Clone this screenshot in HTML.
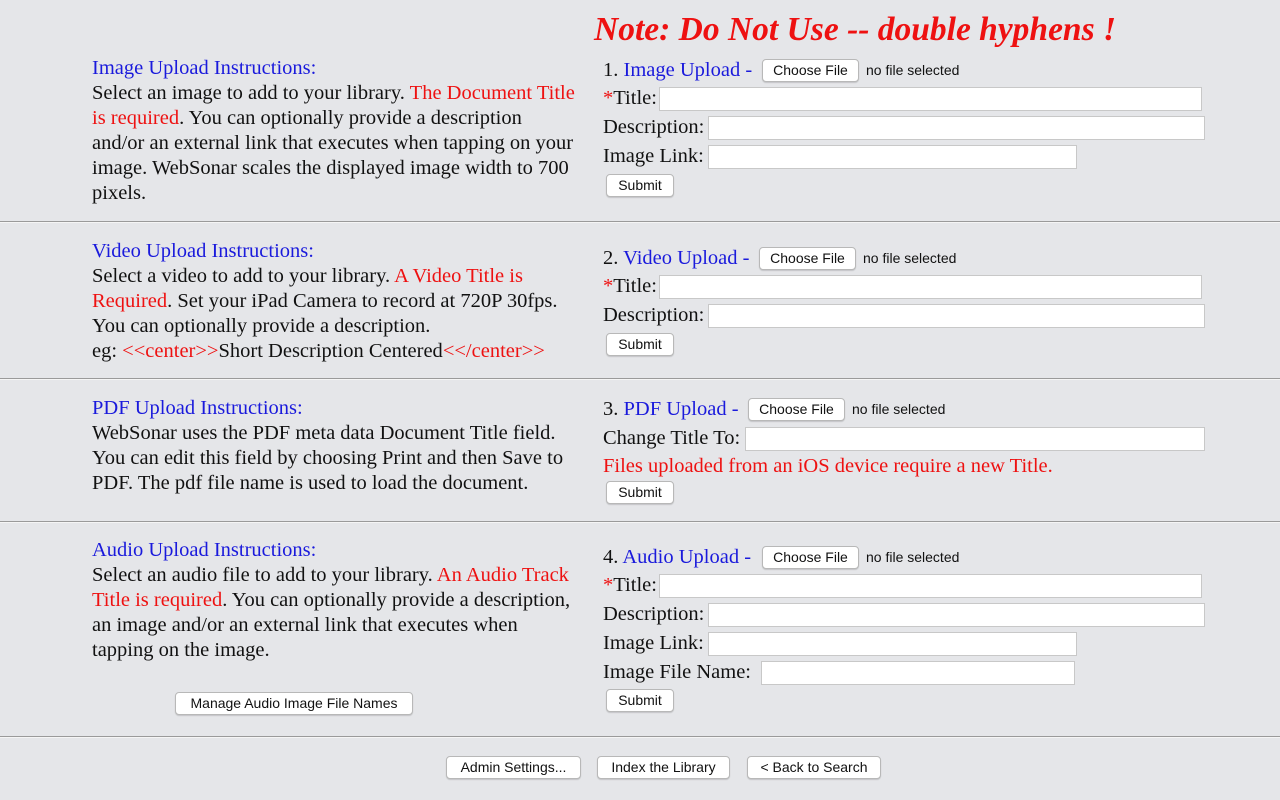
<!DOCTYPE html>
<html><head><style>
body{margin:0;width:1280px;height:800px;background:#e5e6e9;font-family:"Liberation Serif",serif;font-size:20.5px;color:#111;position:relative;overflow:hidden}
.a{position:absolute;white-space:nowrap;line-height:25px}
.b{color:#1a1adc}.r{color:#ee1111}
.hr{position:absolute;left:0;width:1280px;height:1px;background:#9a9a9a;border-bottom:1px solid #f5f5f5}
.in{position:absolute;background:#fff;border:1px solid #c8c8c8;box-sizing:border-box;height:24px}
.btn{position:absolute;background:#fff;border:1px solid #b8b8b8;border-radius:4px;box-sizing:border-box;font-family:"Liberation Sans",sans-serif;font-size:14px;text-align:center;line-height:21px;height:23px;color:#111;box-shadow:0 1px 1px rgba(0,0,0,.15)}
.ns{font-family:"Liberation Sans",sans-serif;font-size:14px}
.lt{position:absolute;left:92px;line-height:25px;white-space:nowrap}
</style></head><body>
<div class="a r" style="left:594px;top:10px;font-size:33.5px;line-height:40px;font-weight:bold;font-style:italic">Note: Do Not Use -- double hyphens !</div>

<div class="lt" style="top:56px"><span class="b">Image Upload Instructions:</span><br>Select an image to add to your library. <span class="r">The Document Title</span><br><span class="r">is required</span>. You can optionally provide a description<br>and/or an external link that executes when tapping on your<br>image. WebSonar scales the displayed image width to 700<br>pixels.</div>
<div class="a" style="left:603px;top:58px">1. <span class="b">Image Upload -</span></div>
<div class="btn" style="left:762px;top:59px;width:97px">Choose File</div>
<div class="a ns" style="left:866px;top:58px">no file selected</div>
<div class="a" style="left:603px;top:86px"><span class="r">*</span>Title:</div><div class="in" style="left:659px;top:87px;width:543px"></div>
<div class="a" style="left:603px;top:115px">Description:</div><div class="in" style="left:708px;top:116px;width:497px"></div>
<div class="a" style="left:603px;top:144px">Image Link:</div><div class="in" style="left:708px;top:145px;width:369px"></div>
<div class="btn" style="left:606px;top:174px;width:68px">Submit</div>
<div class="hr" style="top:221px"></div>

<div class="lt" style="top:239px"><span class="b">Video Upload Instructions:</span><br>Select a video to add to your library. <span class="r">A Video Title is</span><br><span class="r">Required</span>. Set your iPad Camera to record at 720P 30fps.<br>You can optionally provide a description.<br>eg: <span class="r">&lt;&lt;center&gt;&gt;</span>Short Description Centered<span class="r">&lt;&lt;/center&gt;&gt;</span></div>
<div class="a" style="left:603px;top:246px">2. <span class="b">Video Upload -</span></div>
<div class="btn" style="left:759px;top:247px;width:97px">Choose File</div>
<div class="a ns" style="left:863px;top:246px">no file selected</div>
<div class="a" style="left:603px;top:274px"><span class="r">*</span>Title:</div><div class="in" style="left:659px;top:275px;width:543px"></div>
<div class="a" style="left:603px;top:303px">Description:</div><div class="in" style="left:708px;top:304px;width:497px"></div>
<div class="btn" style="left:606px;top:333px;width:68px">Submit</div>
<div class="hr" style="top:378px"></div>

<div class="lt" style="top:396px"><span class="b">PDF Upload Instructions:</span><br>WebSonar uses the PDF meta data Document Title field.<br>You can edit this field by choosing Print and then Save to<br>PDF. The pdf file name is used to load the document.</div>
<div class="a" style="left:603px;top:397px">3. <span class="b">PDF Upload -</span></div>
<div class="btn" style="left:748px;top:398px;width:97px">Choose File</div>
<div class="a ns" style="left:852px;top:397px">no file selected</div>
<div class="a" style="left:603px;top:426px">Change Title To:</div><div class="in" style="left:745px;top:427px;width:460px"></div>
<div class="a r" style="left:603px;top:454px">Files uploaded from an iOS device require a new Title.</div>
<div class="btn" style="left:606px;top:481px;width:68px">Submit</div>
<div class="hr" style="top:521px"></div>

<div class="lt" style="top:538px"><span class="b">Audio Upload Instructions:</span><br>Select an audio file to add to your library. <span class="r">An Audio Track</span><br><span class="r">Title is required</span>. You can optionally provide a description,<br>an image and/or an external link that executes when<br>tapping on the image.</div>
<div class="btn" style="left:175px;top:692px;width:238px">Manage Audio Image File Names</div>
<div class="a" style="left:603px;top:545px">4. <span class="b">Audio Upload -</span></div>
<div class="btn" style="left:762px;top:546px;width:97px">Choose File</div>
<div class="a ns" style="left:866px;top:545px">no file selected</div>
<div class="a" style="left:603px;top:573px"><span class="r">*</span>Title:</div><div class="in" style="left:659px;top:574px;width:543px"></div>
<div class="a" style="left:603px;top:602px">Description:</div><div class="in" style="left:708px;top:603px;width:497px"></div>
<div class="a" style="left:603px;top:631px">Image Link:</div><div class="in" style="left:708px;top:632px;width:369px"></div>
<div class="a" style="left:603px;top:660px">Image File Name:</div><div class="in" style="left:761px;top:661px;width:314px"></div>
<div class="btn" style="left:606px;top:689px;width:68px">Submit</div>
<div class="hr" style="top:736px"></div>

<div class="btn" style="left:446px;top:756px;width:135px">Admin Settings...</div>
<div class="btn" style="left:597px;top:756px;width:133px">Index the Library</div>
<div class="btn" style="left:747px;top:756px;width:134px">&lt; Back to Search</div>
</body></html>
